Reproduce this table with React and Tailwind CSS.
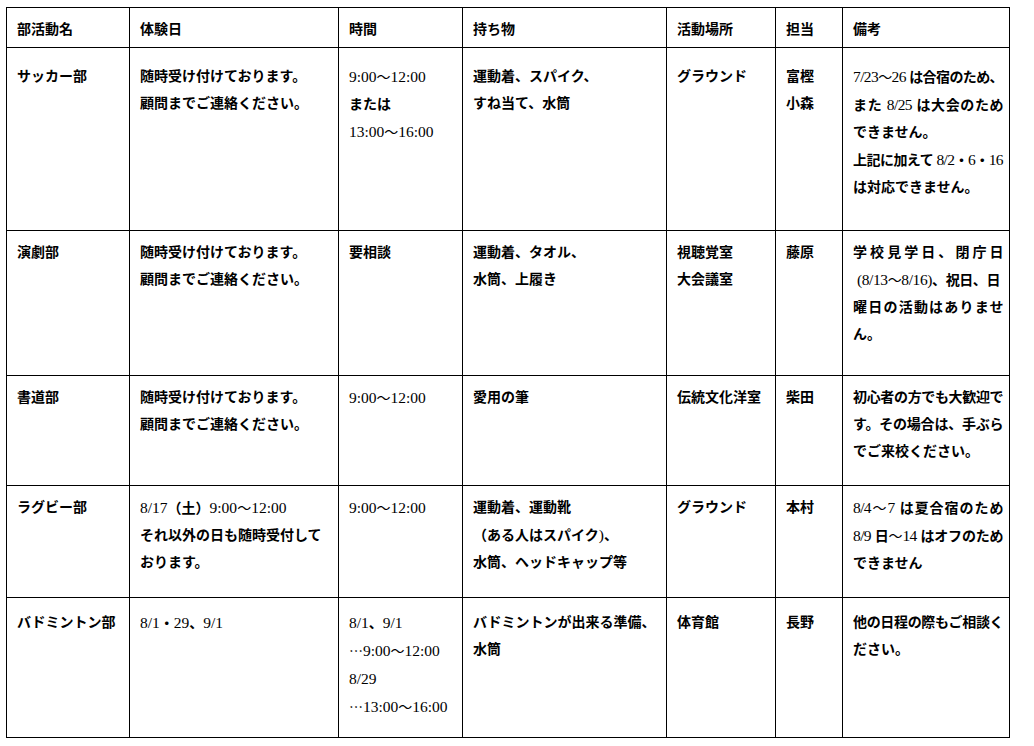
import React from "react";

// Column headers
const header = ["部活動名", "体験日", "時間", "持ち物", "活動場所", "担当", "備考"];

// Column widths (px)
const colWidths = [123, 209, 124, 204, 109, 67, 167];

// Row data: each cell is a list of lines, "|" prefix = justified line
const rows = [
    {
        id: 1,
        height: "h-[183px]",
        pad: "pt-[15px]",
        cells: [
            ["サッカー部"],
            ["随時受け付けております。", "顧問までご連絡ください。"],
            ["9:00～12:00", "または", "13:00～16:00"],
            ["運動着、スパイク、", "すね当て、水筒"],
            ["グラウンド"],
            ["富樫", "小森"],
            ["|7/23～26 は合宿のため、", "|また 8/25 は大会のため", "できません。", "|上記に加えて 8/2・6・16", "は対応できません。"],
        ],
    },
    {
        id: 2,
        height: "h-[145px]",
        pad: "pt-[8px]",
        cells: [
            ["演劇部"],
            ["随時受け付けております。", "顧問までご連絡ください。"],
            ["要相談"],
            ["運動着、タオル、", "水筒、上履き"],
            ["視聴覚室", "大会議室"],
            ["藤原"],
            ["|学校見学日、閉庁日", "^(8/13～8/16)、祝日、日", "|曜日の活動はありませ", "ん。"],
        ],
    },
    {
        id: 3,
        height: "h-[110px]",
        pad: "pt-[8px]",
        cells: [
            ["書道部"],
            ["随時受け付けております。", "顧問までご連絡ください。"],
            ["9:00～12:00"],
            ["愛用の筆"],
            ["伝統文化洋室"],
            ["柴田"],
            ["|初心者の方でも大歓迎で", "|す。その場合は、手ぶら", "でご来校ください。"],
        ],
    },
    {
        id: 4,
        height: "h-[112px]",
        pad: "pt-[8px]",
        cells: [
            ["ラグビー部"],
            ["8/17（土）9:00～12:00", "それ以外の日も随時受付して", "おります。"],
            ["9:00～12:00"],
            ["運動着、運動靴", "（ある人はスパイク)、", "水筒、ヘッドキャップ等"],
            ["グラウンド"],
            ["本村"],
            ["|8/4～7 は夏合宿のため", "|8/9 日～14 はオフのため", "できません"],
        ],
    },
    {
        id: 5,
        height: "h-[140px]",
        pad: "pt-[11px]",
        cells: [
            ["バドミントン部"],
            ["8/1・29、9/1"],
            ["8/1、9/1", "…9:00～12:00", "8/29", "…13:00～16:00"],
            ["バドミントンが出来る準備、", "水筒"],
            ["体育館"],
            ["長野"],
            ["|他の日程の際もご相談く", "ださい。"],
        ],
    },
];

// Latin runs are set in regular weight serif, a bit larger; ellipsis and wave dash stay light
const renderText = (text) =>
    text.split(/([\x20-\x7e]+|…|～)/).map((part, i) => {
        if (part === "…" || part === "～") {
            return (
                <span key={i} className="font-normal font-['Noto_Sans_CJK_JP',sans-serif]">{part}</span>
            );
        }
        if (/^[\x20-\x7e]+$/.test(part)) {
            return <span key={i} className="font-normal text-[15.5px]">{part}</span>;
        }
        return part;
    });

// One line inside a cell
const Line = ({ text }) => {
    if (text.startsWith("|")) {
        return (
            <div className="leading-[27px] whitespace-nowrap tracking-[-0.6px] text-justify [text-align-last:justify]">
                {renderText(text.slice(1))}
            </div>
        );
    }
    if (text.startsWith("^")) {
        return (
            <div className="leading-[27px] whitespace-nowrap pl-[4px] tracking-[-0.4px]">
                {renderText(text.slice(1))}
            </div>
        );
    }
    return <div className="leading-[27px] whitespace-nowrap">{renderText(text)}</div>;
};

// Table Header Component
const TableHeader = () => (
    <thead>
        <tr className="h-[40px]">
            {header.map((head) => (
                <th key={head} className="border border-black align-top pl-[10px] pr-[4px] pt-[8px] text-left font-bold leading-[27px]">
                    {head}
                </th>
            ))}
        </tr>
    </thead>
);

// Table Row Component
const TableRow = ({ row }) => (
    <tr className={row.height}>
        {row.cells.map((lines, i) => (
            <td key={i} className={`border border-black align-top pl-[10px] pr-[6px] ${row.pad}`}>
                {lines.map((line, j) => (
                    <Line key={j} text={line} />
                ))}
            </td>
        ))}
    </tr>
);

const App = () => {
    return (
        <div className="min-h-[746px] w-[1034px] bg-white pl-[6px] pt-[7px] text-black">
            <table
                className="w-[1003px] table-fixed border-collapse text-[14px] font-bold"
                style={{ fontFamily: '"Liberation Serif", "Noto Sans CJK JP", serif' }}
            >
                <colgroup>
                    {colWidths.map((w, i) => (
                        <col key={i} style={{ width: w }} />
                    ))}
                </colgroup>
                <TableHeader />
                <tbody>
                    {rows.map((row) => (
                        <TableRow key={row.id} row={row} />
                    ))}
                </tbody>
            </table>
        </div>
    );
};

export default App;
